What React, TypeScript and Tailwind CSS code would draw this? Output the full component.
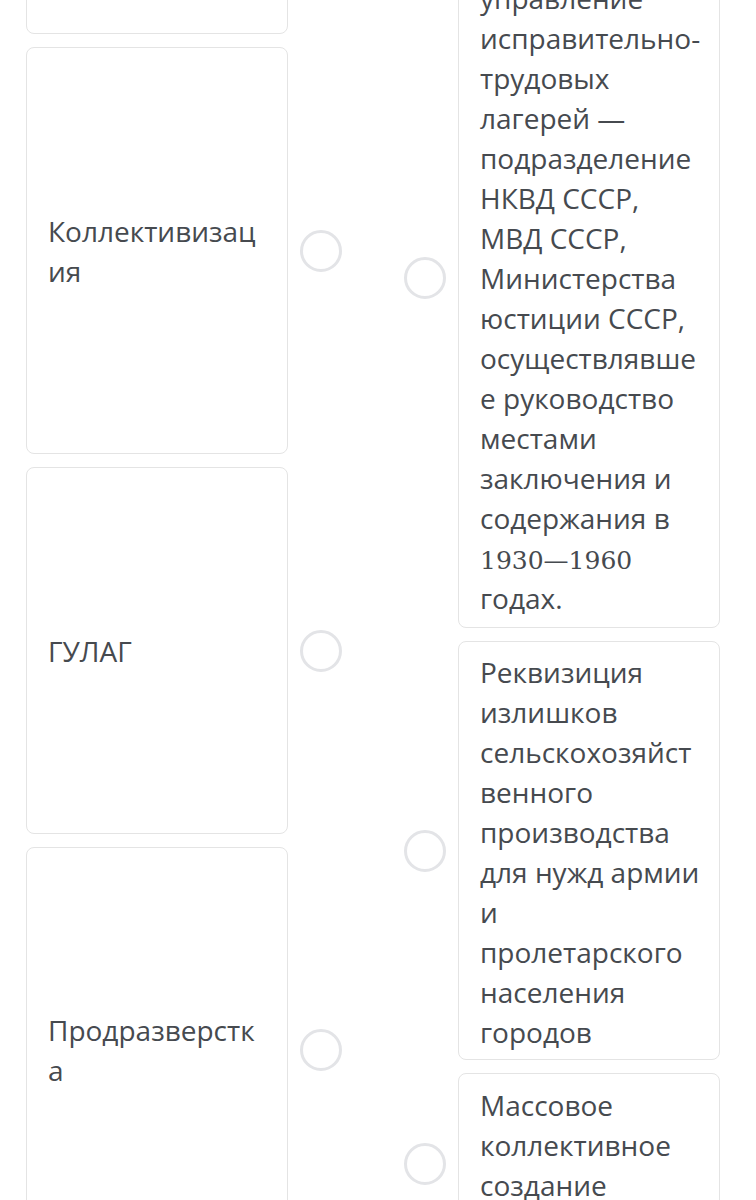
// App.tsx — сопоставление терминов и определений
const terms = [
  { text: 'Индустриализация', h: 'h-[234px]' },
  { text: 'Коллективизация', h: 'h-[407px]' },
  { text: 'ГУЛАГ', h: 'h-[367px]' },
  { text: 'Продразверстка', h: 'h-[406px]' },
]

function Circle() {
  return <div className="h-[42px] w-[42px] flex-shrink-0 rounded-full border-[3px] border-[#e3e4e7] bg-white" />
}

export default function App() {
  return (
    <div
      className="h-[1200px] overflow-hidden bg-white text-[28px] leading-[40px] text-[#464a4f]"
      style={{ fontFamily: '"Open Sans", "Noto Sans", sans-serif' }}
    >
      <div className="-mt-[200px] flex items-start gap-[62px] pl-[26px]">
        {/* левая колонка: термины */}
        <div className="flex flex-col gap-[13px]">
          {terms.map((t) => (
            <div key={t.text} className="flex items-center gap-[12px]">
              <div
                className={`flex w-[262px] items-center rounded-lg border border-[#e4e4e4] pl-[21px] pr-[18px] ${t.h}`}
              >
                <span className="w-full break-words">{t.text}</span>
              </div>
              <Circle />
            </div>
          ))}
        </div>

        {/* правая колонка: определения */}
        <div className="flex flex-col gap-[13px] pt-[128px]">
          <div className="flex items-center gap-[12px]">
            <Circle />
            <div className="w-[262px] rounded-lg border border-[#e4e4e4] py-[9px] pl-[21px] pr-[18px] break-words">
              Главное управление исправительно-трудовых лагерей — подразделение НКВД СССР, МВД СССР, Министерства
              юстиции СССР, осуществлявшее руководство местами заключения и содержания в{' '}
              <span style={{ fontFamily: '"DejaVu Serif", "Liberation Serif", serif' }} className="text-[25px] leading-none">
                1930—1960
              </span>{' '}
              годах.
            </div>
          </div>
          <div className="flex items-center gap-[12px]">
            <Circle />
            <div className="w-[262px] rounded-lg border border-[#e4e4e4] pt-[10px] pb-[7px] pl-[21px] pr-[18px] break-words">
              Реквизиция излишков сельскохозяйственного производства для нужд армии и пролетарского населения
              городов
            </div>
          </div>
          <div className="flex items-center gap-[12px]">
            <Circle />
            <div className="w-[262px] rounded-lg border border-[#e4e4e4] pt-[11px] pb-[8px] pl-[21px] pr-[18px] break-words">
              Массовое коллективное создание колхозов
            </div>
          </div>
        </div>
      </div>
    </div>
  )
}
